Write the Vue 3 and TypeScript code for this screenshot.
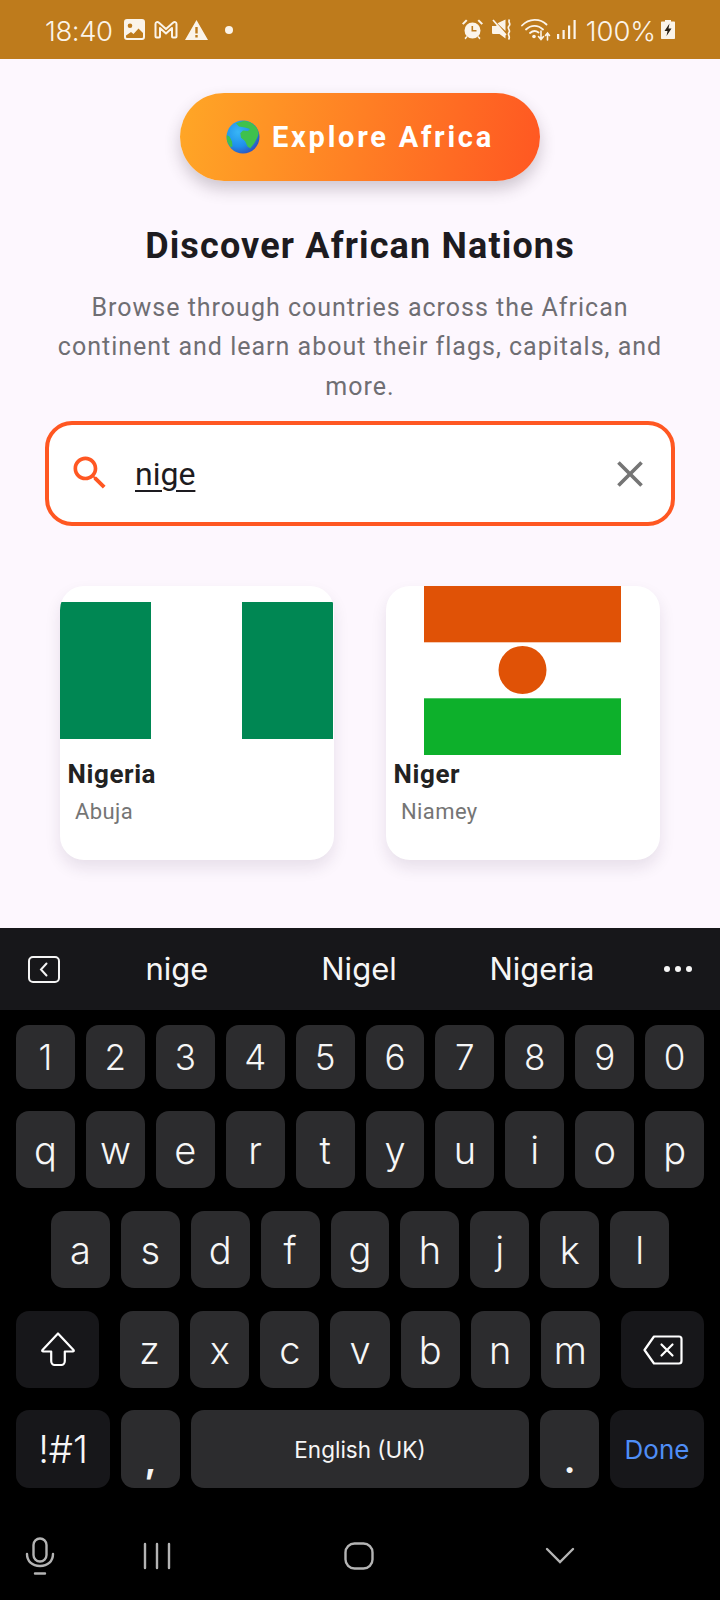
<script setup lang="ts">
const digitKeys = ['1', '2', '3', '4', '5', '6', '7', '8', '9', '0']
const topLetters = ['q', 'w', 'e', 'r', 't', 'y', 'u', 'i', 'o', 'p']
const midLetters = ['a', 's', 'd', 'f', 'g', 'h', 'j', 'k', 'l']
const lowLetters = ['z', 'x', 'c', 'v', 'b', 'n', 'm']
const suggestions = ['nige', 'Nigel', 'Nigeria']

interface Country {
  name: string
  capital: string
  flag: 'ng' | 'ne'
}

const countries: Country[] = [
  { name: 'Nigeria', capital: 'Abuja', flag: 'ng' },
  { name: 'Niger', capital: 'Niamey', flag: 'ne' },
]
</script>

<template>
  <div class="screen">
    <header class="status">
      <span class="clock">18:40</span>
      <svg class="st-pic" width="21" height="21" viewBox="0 0 21 21">
        <path fill="#fbf4ea" fill-rule="evenodd" d="M3 0h15a3 3 0 0 1 3 3v15a3 3 0 0 1-3 3H3a3 3 0 0 1-3-3V3a3 3 0 0 1 3-3zM6 4.500a2.300 2.300 0 1 0 0 4.600a2.300 2.300 0 0 0 0-4.600zM2 16.500v1.500a1 1 0 0 0 1 1h15a1 1 0 0 0 1-1v-4l-4.500-4.500-5 5.500-2.500-2z" />
      </svg>
      <svg class="st-mail" width="24" height="18" viewBox="0 0 24 18" fill="none" stroke="#fbf4ea" stroke-width="2">
        <path d="M1.500 15.500V3c0-2 2-2.500 3.500-1.200L12 8l7-6.200C20.500.5 22.500 1 22.500 3v12.500c0 .6-.4 1-1 1h-2.500c-.6 0-1-.4-1-1V7L12 12.500 6 7v8.500c0 .6-.4 1-1 1H2.500c-.6 0-1-.4-1-1z" stroke-linejoin="round" />
      </svg>
      <svg class="st-warn" width="23" height="20" viewBox="0 0 23 20">
        <path fill="#fbf4ea" fill-rule="evenodd" d="M11.500 0L23 20H0zM10.300 7v6.500h2.400V7zM10.300 15v2.400h2.400V15z" />
      </svg>
      <span class="st-dot"></span>
      <span class="st-spacer"></span>
      <svg width="21" height="21" viewBox="0 0 21 21">
        <path fill="#fbf4ea" fill-rule="evenodd" d="M10.500 3.500a8 8 0 1 1 0 16a8 8 0 0 1 0-16zM9.500 7v5.500h5v-1.600h-3.400V7z" />
        <path fill="#fbf4ea" d="M0 4.500L4 .5l1.500 1.200-4 4zM21 4.500L17 .5l-1.500 1.200 4 4zM2.500 19l2-2 1 1-2 2.500zM18.500 19l-2-2-1 1 2 2.500z" />
      </svg>
      <svg class="st-mute" width="21" height="21" viewBox="0 0 21 21">
        <path fill="#fbf4ea" d="M0 7h4l1-1 8.500 9v4.500L7.500 15H1.500C.5 15 0 14.500 0 13.500zM7 3.500l6.500-3v11.500L5.500 4.500z" />
        <path fill="none" stroke="#fbf4ea" stroke-width="1.700" d="M17.500 .5c-2 3 2 4-.5 6.500s2 4 0 6.500 2 4-.5 7M1 1l13 15" />
      </svg>
      <svg class="st-wifi" width="30" height="23" viewBox="0 0 30 23" fill="none" stroke="#fbf4ea" stroke-width="1.800" stroke-linecap="round">
        <path d="M1 7.500C8 .2 19 .2 25.500 6.500M5 11.500c5-4.800 12-4.800 17 0M9 15c2.800-2.400 6-2.400 8.500-.5" />
        <circle cx="13" cy="18.500" r="1.800" fill="#fbf4ea" stroke="none" />
        <path d="M20 13v8M17.500 18.500l2.500 3 2.500-3M26.500 22v-7M24.500 17.500l2-2.500 2 2.500" stroke-width="1.600" />
      </svg>
      <svg class="st-signal" width="19" height="19" viewBox="0 0 19 19" fill="#fbf4ea">
        <rect x="0" y="14" width="2.200" height="5" />
        <rect x="5.500" y="10" width="2.200" height="9" />
        <rect x="11" y="5.500" width="2.200" height="13.500" />
        <rect x="16.500" y="0" width="2.200" height="19" />
      </svg>
      <span class="battery-text">100%</span>
      <svg width="14" height="19" viewBox="0 0 14 19">
        <path fill="#fbf4ea" d="M4 0h6v1.500h3c.6 0 1 .4 1 1V18c0 .6-.4 1-1 1H1c-.6 0-1-.4-1-1V2.500c0-.6.4-1 1-1h3z" />
        <path fill="#2a2117" d="M8.500 3.500L3.500 11h3l-1 5 5-7.500h-3z" />
      </svg>
    </header>

    <main class="page">
      <button class="explore">
        <svg width="34" height="34" viewBox="0 0 34 34">
          <defs>
            <radialGradient id="sea" cx="0.35" cy="0.35" r="0.8">
              <stop offset="0" stop-color="#38b6f6" />
              <stop offset="0.55" stop-color="#1f8fea" />
              <stop offset="1" stop-color="#3340b0" />
            </radialGradient>
            <clipPath id="ball">
              <circle cx="17" cy="17" r="16.500" />
            </clipPath>
          </defs>
          <circle cx="17" cy="17" r="16.500" fill="url(#sea)" />
          <g clip-path="url(#ball)" fill="#3fc14d">
            <path d="M10 3.300L18.300 .7 25 2.300 31 7.700 32.700 13.300 31.700 16.700 28.300 23.300 24.300 28.300 21.700 26.700 19 21 15 17.700 14.300 13.300 17 10.500 22 11 24 9 19 7.500 13 6.500z" />
            <path d="M.5 15l3 1.500 2.500 5 .5 5-2 .5L.5 21z" />
          </g>
        </svg>
        <span>Explore Africa</span>
      </button>

      <h1 class="title">Discover African Nations</h1>
      <p class="subtitle">Browse through countries across the African continent and learn about their flags, capitals, and more.</p>

      <div class="search">
        <svg class="search-icon" width="44" height="44" viewBox="0 0 24 24">
          <path fill="#ff5722" d="M15.500 14h-.79l-.28-.27C15.410 12.590 16 11.110 16 9.500 16 5.910 13.090 3 9.500 3S3 5.910 3 9.500 5.910 16 9.500 16c1.610 0 3.090-.59 4.230-1.570l.27.28v.79l5 4.990L20.490 19l-4.990-5zm-6 0C7.010 14 5 11.990 5 9.500S7.010 5 9.500 5 14 7.010 14 9.500 11.990 14 9.500 14z" />
        </svg>
        <span class="query">nige</span>
        <svg width="44" height="44" viewBox="0 0 24 24">
          <path fill="#757575" d="M19 6.410L17.590 5 12 10.590 6.410 5 5 6.410 10.590 12 5 17.590 6.410 19 12 13.410 17.590 19 19 17.590 13.410 12z" />
        </svg>
      </div>

      <section class="grid">
        <article v-for="c in countries" :key="c.name" class="card">
          <div class="flag-box">
            <svg v-if="c.flag === 'ng'" width="273" height="137" viewBox="0 0 3 2" preserveAspectRatio="none">
              <rect width="1" height="2" fill="#008753" />
              <rect x="1" width="1" height="2" fill="#fff" />
              <rect x="2" width="1" height="2" fill="#008753" />
            </svg>
            <svg v-else width="197" height="169" viewBox="0 0 197 169">
              <rect width="197" height="56.300" fill="#e05206" />
              <rect y="112.300" width="197" height="56.700" fill="#0db02b" />
              <circle cx="98.500" cy="84" r="24" fill="#e05206" />
            </svg>
          </div>
          <h2 class="name">{{ c.name }}</h2>
          <p class="capital">{{ c.capital }}</p>
        </article>
      </section>
    </main>

    <section class="keyboard">
      <div class="suggest">
        <svg width="32" height="27" viewBox="0 0 32 27" fill="none" stroke="#f4f4f4" stroke-width="2">
          <rect x="1" y="1" width="30" height="25" rx="4" />
          <path d="M18.500 7.500l-5.500 6 5.500 6" stroke-linecap="round" />
        </svg>
        <span v-for="s in suggestions" :key="s" class="word">{{ s }}</span>
        <span class="more"><i></i><i></i><i></i></span>
      </div>

      <div class="keys">
        <div class="row digits">
          <button v-for="k in digitKeys" :key="k" class="key">{{ k }}</button>
        </div>
        <div class="row tall first">
          <button v-for="k in topLetters" :key="k" class="key letter">{{ k }}</button>
        </div>
        <div class="row tall inset">
          <button v-for="k in midLetters" :key="k" class="key letter">{{ k }}</button>
        </div>
        <div class="row tall low">
          <button class="key fn">
            <svg width="34" height="35" viewBox="0 0 34 35" fill="none" stroke="#fff" stroke-width="2.200" stroke-linejoin="round">
              <path d="M17 1.500L32.500 18c.6.700.2 1.500-.7 1.500h-8V29c0 2-1.500 4-3.500 4h-6.600c-2 0-3.500-2-3.500-4v-9.500h-8c-.9 0-1.300-.8-.7-1.500z" />
            </svg>
          </button>
          <div class="letters">
            <button v-for="k in lowLetters" :key="k" class="key letter">{{ k }}</button>
          </div>
          <button class="key fn">
            <svg width="40" height="30" viewBox="0 0 40 30" fill="none" stroke="#fff" stroke-width="2.200" stroke-linecap="round" stroke-linejoin="round">
              <path d="M11 1.500h25c1.400 0 2.500 1.100 2.500 2.500v22c0 1.400-1.100 2.500-2.500 2.500H11L1.500 15z" />
              <path d="M18.500 9.500l11 11M29.500 9.500l-11 11" />
            </svg>
          </button>
        </div>
        <div class="row last">
          <button class="key fn sym">!#1</button>
          <button class="key punct">,</button>
          <button class="key space">English (UK)</button>
          <button class="key punct">.</button>
          <button class="key fn done">Done</button>
        </div>
      </div>

      <nav class="nav">
        <svg width="30" height="38" viewBox="0 0 30 38" fill="none" stroke="#b4b4b4" stroke-width="2.400" stroke-linecap="round">
          <rect x="8.500" y="1.500" width="13" height="23" rx="6.500" />
          <path d="M2 17c0 7 5 12 13 12s13-5 13-12M10 36.500h10" />
        </svg>
        <svg width="28" height="28" viewBox="0 0 28 28" stroke="#b4b4b4" stroke-width="2.400" stroke-linecap="round">
          <path d="M2 2v24M14 2v24M26 2v24" />
        </svg>
        <svg width="30" height="28" viewBox="0 0 30 28" fill="none" stroke="#b4b4b4" stroke-width="2.400">
          <rect x="1.500" y="1.500" width="27" height="25" rx="9" />
        </svg>
        <svg width="30" height="17" viewBox="0 0 30 17" fill="none" stroke="#b4b4b4" stroke-width="2.400" stroke-linecap="round">
          <path d="M2 2l13 13L28 2" />
        </svg>
      </nav>
    </section>
  </div>
</template>

<style>
html,
body {
  margin: 0;
  background: #000;
}
</style>

<style scoped>
.screen {
  width: 720px;
  height: 1600px;
  display: flex;
  flex-direction: column;
  overflow: hidden;
  font-family: Roboto, sans-serif;
  background: #fdf7fe;
}

.status {
  height: 59px;
  flex: none;
  display: flex;
  align-items: center;
  padding: 0 45px;
  box-sizing: border-box;
  background: #be7b1c;
  color: #fbf4ea;
  font-family: Inter, sans-serif;
  font-weight: 300;
  font-size: 27.500px;
}

.clock {
  width: 67px;
  margin-top: 3px;
  letter-spacing: -0.4px;
  white-space: nowrap;
}

.st-pic {
  margin-left: 12px;
}

.st-mail {
  margin-left: 9px;
}

.st-warn {
  margin-left: 7px;
}

.st-dot {
  width: 8px;
  height: 8px;
  margin-left: 17px;
  border-radius: 50%;
  background: #fbf4ea;
}

.st-spacer {
  flex: 1;
}

.st-mute {
  margin-left: 9px;
}

.st-wifi {
  margin-left: 8px;
}

.st-signal {
  margin-left: 6px;
}

.battery-text {
  margin-left: 10px;
  margin-right: 5px;
  letter-spacing: -0.1px;
  margin-top: 2px;
}

.page {
  flex: 1;
  display: flex;
  flex-direction: column;
  align-items: center;
  padding-top: 34px;
  box-sizing: border-box;
}

.explore {
  width: 360px;
  height: 88px;
  display: flex;
  align-items: center;
  justify-content: center;
  gap: 12px;
  padding: 0;
  border: 0;
  border-radius: 44px;
  background: linear-gradient(100deg, #ffa726, #ff5722);
  box-shadow: 0 8px 16px rgba(60, 40, 60, 0.24);
  color: #fff;
  font-family: Roboto, sans-serif;
  font-weight: 700;
  font-size: 29px;
  letter-spacing: 2.750px;
}

.title {
  margin: 41px 0 0;
  font-size: 36px;
  line-height: 48px;
  font-weight: 700;
  letter-spacing: 1.150px;
  color: #1d1b20;
}

.subtitle {
  width: 630px;
  margin: 18px 0 0;
  text-align: center;
  font-size: 25px;
  line-height: 39.300px;
  letter-spacing: 1px;
  color: #6f6e73;
}

.search {
  width: 630px;
  height: 105.500px;
  margin-top: 15px;
  padding: 0 19px;
  display: flex;
  align-items: center;
  box-sizing: border-box;
  border: 4px solid #ff5722;
  border-radius: 27px;
  background: #fff;
}

.search-icon {
  margin-top: -2px;
}

.query {
  flex: 1;
  margin-left: 23px;
  font-size: 32px;
  color: #1d1b20;
  text-decoration: underline;
  text-underline-offset: 5px;
  text-decoration-thickness: 1.500px;
}

.grid {
  width: 600px;
  margin-top: 60px;
  display: grid;
  grid-template-columns: 273.500px 273.500px;
  column-gap: 52.500px;
}

.card {
  height: 274px;
  border-radius: 24px;
  overflow: hidden;
  background: #fff;
  box-shadow: 0 8px 16px rgba(40, 20, 60, 0.1);
}

.flag-box {
  height: 169px;
  display: flex;
  align-items: center;
  justify-content: center;
}

.flag-box svg {
  display: block;
}

.name {
  margin: 2px 0 0 7.500px;
  font-size: 26px;
  line-height: 34px;
  font-weight: 700;
  letter-spacing: 0.600px;
  color: #222;
}

.capital {
  margin: 6px 0 0 15px;
  font-size: 22px;
  line-height: 30px;
  letter-spacing: 0.400px;
  color: #757575;
}

.keyboard {
  height: 672px;
  flex: none;
  display: flex;
  flex-direction: column;
  background: #000;
  font-family: Inter, sans-serif;
}

.suggest {
  height: 82px;
  flex: none;
  display: flex;
  align-items: center;
  position: relative;
  padding-left: 28px;
  box-sizing: border-box;
  background: #17171a;
  color: #f6f6f6;
}

.word {
  position: absolute;
  top: 19px;
  transform: translateX(-50%);
  font-size: 31px;
  line-height: 44px;
}

.word:nth-of-type(1) {
  left: 177px;
}

.word:nth-of-type(2) {
  left: 359px;
}

.word:nth-of-type(3) {
  left: 542px;
}

.more {
  position: absolute;
  left: 664px;
  display: flex;
  gap: 5px;
}

.more i {
  width: 6px;
  height: 6px;
  border-radius: 50%;
  background: #f6f6f6;
}

.keys {
  padding: 15px 16px 0;
  display: flex;
  flex-direction: column;
}

.row {
  display: flex;
  gap: 11px;
}

.digits {
  height: 64px;
}

.row.tall {
  height: 77px;
  margin-top: 23px;
}

.row.first {
  margin-top: 22px;
}

.row.inset {
  padding: 0 35px;
}

.row.last {
  height: 78px;
  margin-top: 22px;
}

.key {
  flex: 1 1 0;
  min-width: 0;
  display: flex;
  align-items: center;
  justify-content: center;
  padding: 0;
  border: 0;
  border-radius: 13px;
  background: #2c2c2e;
  color: #f6f6f6;
  font-family: Inter, sans-serif;
  font-weight: 300;
  font-size: 35px;
}

.key.letter {
  font-size: 38px;
}

.key.fn {
  background: #17171a;
}

.low {
  gap: 21px;
}

.low .fn {
  flex: 0 0 83px;
}

.letters {
  flex: 1;
  display: flex;
  gap: 11px;
}

.sym {
  flex: 0 0 94px;
  font-size: 38px;
}

.punct {
  flex: 0 0 59px;
  align-items: flex-end;
  padding-bottom: 10px;
  box-sizing: border-box;
  font-weight: 700;
  line-height: 1;
}

.space {
  flex: 1;
  font-weight: 400;
  font-size: 22.500px;
}

.done {
  flex: 0 0 94px;
  font-weight: 400;
  font-size: 26px;
  color: #4f8ef7;
}

.nav {
  flex: 1;
  display: flex;
  align-items: center;
  padding: 23px 0 0 25px;
  gap: 88px;
}

.nav svg:nth-child(3) {
  margin-left: 85px;
}

.nav svg:nth-child(4) {
  margin-left: 83px;
}
</style>
